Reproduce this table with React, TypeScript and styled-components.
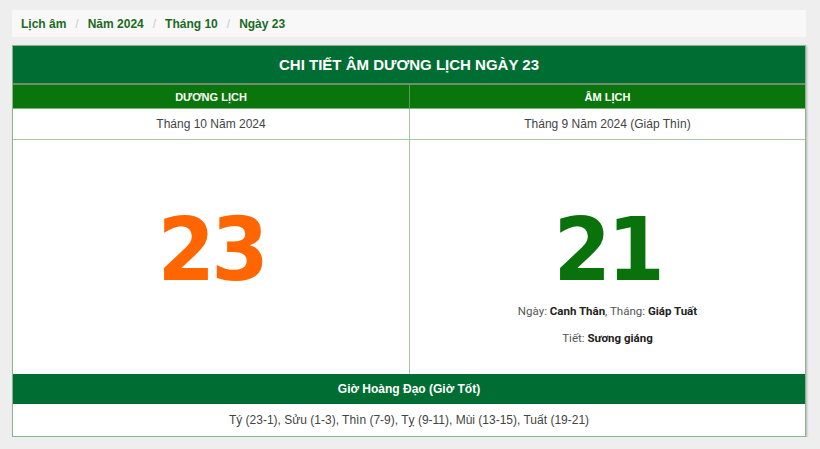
import React from 'react';
import styled, { createGlobalStyle } from 'styled-components';

const GlobalStyle = createGlobalStyle`
  html, body {
    margin: 0;
    padding: 0;
    background: #eeeeee;
    font-family: "Liberation Sans", Arial, sans-serif;
  }
`;

const Page = styled.div`
  width: 794px;
  padding: 10px 0 0 12px;
`;

const Breadcrumb = styled.nav`
  display: flex;
  align-items: center;
  height: 27px;
  padding: 0 9px;
  background: #f8f8f8;
  font-size: 12px;
  font-weight: bold;
  margin-bottom: 8px;
`;

const Crumb = styled.a`
  color: #1b6b24;
  text-decoration: none;
`;

const Sep = styled.span`
  color: #cccccc;
  font-weight: normal;
  padding: 0 9px;
`;

const Table = styled.div`
  border: 1px solid #8fb28f;
  background: #ffffff;
  box-shadow: 1px 1px 2px rgba(0, 0, 0, 0.25);
`;

const Title = styled.div`
  height: 37px;
  display: flex;
  align-items: center;
  justify-content: center;
  background: #006d32;
  color: #ffffff;
  font-size: 15px;
  font-weight: bold;
  border-bottom: 2px solid #6f8b70;
`;

const Row = styled.div`
  display: grid;
  grid-template-columns: 397px 1fr;
`;

const HeadCell = styled.div<{ $last?: boolean }>`
  height: 23px;
  display: flex;
  align-items: center;
  justify-content: center;
  background: #0a750a;
  color: #ffffff;
  font-size: 11px;
  font-weight: bold;
  border-right: ${p => (p.$last ? 'none' : '1px solid #5d995d')};
  border-bottom: 1px solid #7fae7f;
`;

const MonthCell = styled.div<{ $last?: boolean }>`
  height: 30px;
  display: flex;
  align-items: center;
  justify-content: center;
  color: #444444;
  font-size: 12px;
  border-right: ${p => (p.$last ? 'none' : '1px solid #a6c6a6')};
  border-bottom: 1px solid #a6c6a6;
`;

const DayCell = styled.div<{ $last?: boolean }>`
  height: 234px;
  display: flex;
  flex-direction: column;
  align-items: center;
  padding-top: 66px;
  box-sizing: border-box;
  border-right: ${p => (p.$last ? 'none' : '1px solid #a6c6a6')};
`;

const BigNumber = styled.div<{ $color: string }>`
  font-family: "DejaVu Sans", Verdana, sans-serif;
  font-weight: bold;
  font-size: 88px;
  line-height: 88px;
  letter-spacing: -4px;
  transform: scaleX(0.94);
  color: ${p => p.$color};
`;

const Info = styled.div`
  font-family: Roboto, "Liberation Sans", sans-serif;
  font-size: 11.5px;
  color: #555555;
  margin-top: 10px;

  & + & {
    margin-top: 13px;
  }

  b {
    color: #222222;
  }
`;

const Band = styled.div`
  height: 30px;
  display: flex;
  align-items: center;
  justify-content: center;
  background: #006d32;
  color: #ffffff;
  font-size: 12px;
  font-weight: bold;
`;

const Hours = styled.div`
  height: 32px;
  display: flex;
  align-items: center;
  justify-content: center;
  color: #444444;
  font-size: 12px;
`;

export default function App() {
  return (
    <>
      <GlobalStyle />
      <Page>
        <Breadcrumb>
          <Crumb>Lịch âm</Crumb>
          <Sep>/</Sep>
          <Crumb>Năm 2024</Crumb>
          <Sep>/</Sep>
          <Crumb>Tháng 10</Crumb>
          <Sep>/</Sep>
          <Crumb>Ngày 23</Crumb>
        </Breadcrumb>
        <Table>
          <Title>CHI TIẾT ÂM DƯƠNG LỊCH NGÀY 23</Title>
          <Row>
            <HeadCell>DƯƠNG LỊCH</HeadCell>
            <HeadCell $last>ÂM LỊCH</HeadCell>
          </Row>
          <Row>
            <MonthCell>Tháng 10 Năm 2024</MonthCell>
            <MonthCell $last>Tháng 9 Năm 2024 (Giáp Thìn)</MonthCell>
          </Row>
          <Row>
            <DayCell>
              <BigNumber $color="#ff6600">23</BigNumber>
            </DayCell>
            <DayCell $last>
              <BigNumber $color="#0a720a">21</BigNumber>
              <Info>
                Ngày: <b>Canh Thân</b>, Tháng: <b>Giáp Tuất</b>
              </Info>
              <Info>
                Tiết: <b>Sương giáng</b>
              </Info>
            </DayCell>
          </Row>
          <Band>Giờ Hoàng Đạo (Giờ Tốt)</Band>
          <Hours>Tý (23-1), Sửu (1-3), Thìn (7-9), Tỵ (9-11), Mùi (13-15), Tuất (19-21)</Hours>
        </Table>
      </Page>
    </>
  );
}
